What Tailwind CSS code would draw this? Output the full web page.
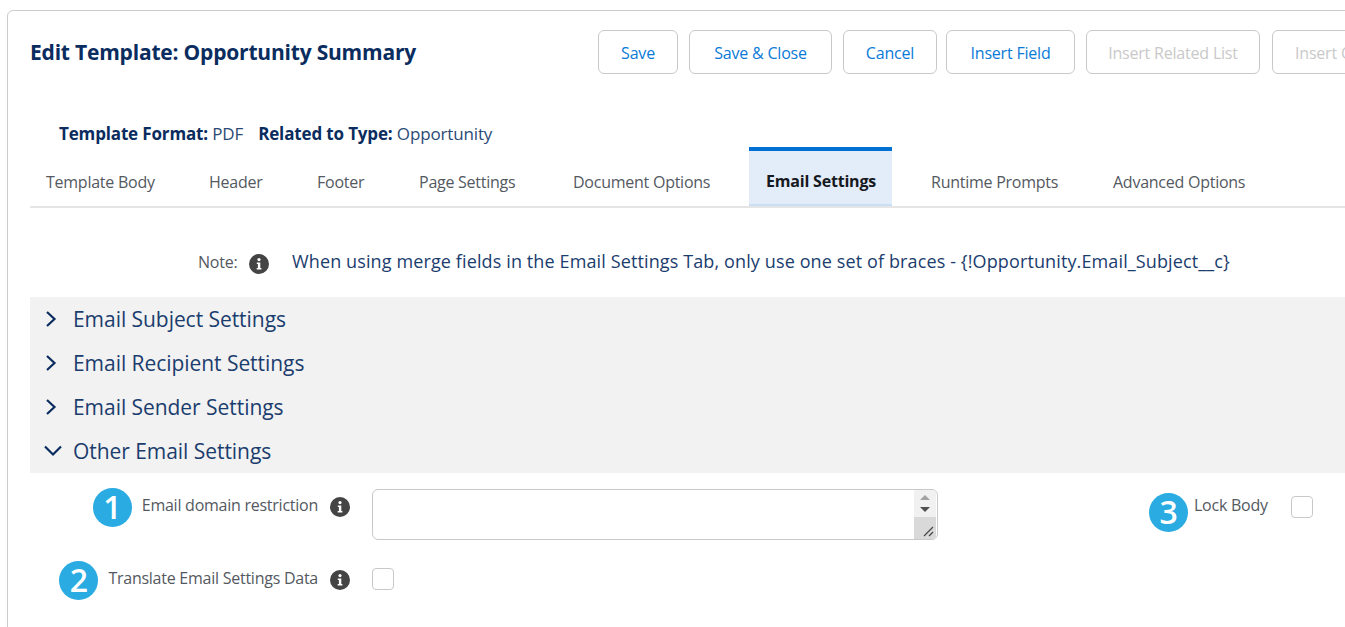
<!DOCTYPE html>
<html lang="en">
<head>
    <meta charset="UTF-8">
    <title>Edit Template</title>
    <script src="https://cdn.jsdelivr.net/npm/@tailwindcss/browser@4"></script>
</head>
<body class="bg-white h-[627px] overflow-hidden font-['Open_Sans',sans-serif]">
    <div class="ml-[7px] mt-[10px] w-[1500px] h-[700px] border border-[#cccccc] rounded-tl-md pl-[22px]">
        <!-- title + buttons -->
        <div class="flex items-start pt-[19px]">
            <h1 class="w-[568px] mt-[6px] -mb-[1px] text-[21px] leading-[32px] font-bold tracking-[-0.2px] text-[#0a2c5e]">Edit Template: Opportunity Summary</h1>
            <div class="flex gap-[11px] text-[16px] tracking-[-0.2px] text-[#0a7ad8]">
                <button class="w-[80px] h-[44px] pt-[2px] border border-[#c9c9c9] rounded-md">Save</button>
                <button class="w-[143px] h-[44px] pt-[2px] border border-[#c9c9c9] rounded-md">Save &amp; Close</button>
                <button class="w-[94px] h-[44px] pt-[2px] border border-[#c9c9c9] rounded-md -mr-[2px]">Cancel</button>
                <button class="w-[129px] h-[44px] pt-[2px] border border-[#c9c9c9] rounded-md">Insert Field</button>
                <button class="w-[174px] h-[44px] pt-[2px] border border-[#c9c9c9] rounded-md text-[#c9c9c9]">Insert Related List</button>
                <button class="ml-[1px] w-[140px] h-[44px] pt-[2px] border border-[#c9c9c9] rounded-md text-[#c9c9c9] text-left pl-[22px]">Insert Other</button>
            </div>
        </div>
        <!-- format line -->
        <div class="mt-[46px] ml-[29px] h-[28px] flex gap-[15px] text-[17px] leading-[28px] tracking-[-0.15px] text-[#2a4a75]">
            <span><b class="font-bold text-[#0a2c5e]">Template Format:</b> PDF</span>
            <span><b class="font-bold text-[#0a2c5e]">Related to Type:</b> Opportunity</span>
        </div>
        <!-- tabs -->
        <div class="mt-[-1px] w-[1500px] h-[61px] border-b-2 border-[#e5e5e5] flex items-stretch text-[16px] tracking-[-0.25px] text-[#54595f]">
            <div class="w-[179px] pl-[16px] pt-[23px]">Template Body</div>
            <div class="w-[108px] pt-[23px]">Header</div>
            <div class="w-[102px] pt-[23px]">Footer</div>
            <div class="w-[154px] pt-[23px]">Page Settings</div>
            <div class="w-[176px] pt-[23px]">Document Options</div>
            <div class="w-[143px] pl-[17px] pt-[18px] bg-[#e3edf9] border-t-[4px] border-b-[2px] border-t-[#0070d2] border-b-[#c9dff5] font-bold text-[#16191f] whitespace-nowrap tracking-[-0.2px]">Email Settings</div>
            <div class="w-[221px] pl-[39px] pt-[23px]">Runtime Prompts</div>
            <div class="pt-[23px]">Advanced Options</div>
        </div>
        <!-- note -->
        <div class="mt-[40px] ml-[168px] h-[28px] flex items-center text-[#1b3d6e] text-[18px] tracking-[0.12px]">
            <span class="text-[16px] tracking-[-0.2px] text-[#54595f] w-[41px]">Note:</span>
            <svg class="ml-[10px] w-[20px] h-[20px] mt-[3px]" viewBox="0 0 20 20"><circle cx="10" cy="10" r="10" fill="#444444"/><circle cx="10" cy="5.6" r="1.6" fill="#fff"/><path d="M7.8 8.4h3.5v5.6h1.1v1.5H7.7V14h1.2V9.900H7.8z" fill="#fff"/></svg>
            <span class="ml-[23px] -mt-[2px] whitespace-nowrap">When using merge fields in the Email Settings Tab, only use one set of braces - {!Opportunity.Email_Subject__c}</span>
        </div>
        <!-- accordion -->
        <div class="mt-[21px] bg-[#f2f2f2] text-[21px] tracking-[-0.05px] text-[#1b3d6e]">
            <div class="h-[44px] flex items-center pl-[14px]">
                <svg class="w-[14px] h-[16px] mr-[15px]" viewBox="0 0 14 16"><path d="M3 1L10.500 8 3 15" fill="none" stroke="#0a2c5e" stroke-width="2.200"/></svg>
                <span class="pt-[2px]">Email Subject Settings</span>
            </div>
            <div class="h-[44px] flex items-center pl-[14px]">
                <svg class="w-[14px] h-[16px] mr-[15px]" viewBox="0 0 14 16"><path d="M3 1L10.500 8 3 15" fill="none" stroke="#0a2c5e" stroke-width="2.200"/></svg>
                <span class="pt-[2px]">Email Recipient Settings</span>
            </div>
            <div class="h-[44px] flex items-center pl-[14px]">
                <svg class="w-[14px] h-[16px] mr-[15px]" viewBox="0 0 14 16"><path d="M3 1L10.500 8 3 15" fill="none" stroke="#0a2c5e" stroke-width="2.200"/></svg>
                <span class="pt-[2px]">Email Sender Settings</span>
            </div>
            <div class="h-[44px] flex items-center pl-[14px]">
                <svg class="w-[18px] h-[14px] mr-[11px]" viewBox="0 0 18 14"><path d="M1 2.500l8 8 8-8" fill="none" stroke="#0a2c5e" stroke-width="2.200"/></svg>
                <span class="pt-[2px]">Other Email Settings</span>
            </div>
        </div>
        <!-- fields -->
        <div class="flex items-start mt-[16px] text-[16px] tracking-[-0.25px] text-[#54595f]">
            <div class="w-[288px] flex justify-end gap-[10px] pt-[1px] -mt-[2px]">
                <span class="w-[39px] h-[39px] rounded-full bg-[#2aace3] text-white font-semibold text-[32px] leading-[38px] text-center shrink-0">1</span>
                <span class="mt-[5px] whitespace-nowrap">Email domain restriction</span>
            </div>
            <svg class="ml-[12px] mt-[8px] w-[20px] h-[20px]" viewBox="0 0 20 20"><circle cx="10" cy="10" r="10" fill="#444444"/><circle cx="10" cy="5.6" r="1.6" fill="#fff"/><path d="M7.8 8.4h3.5v5.6h1.1v1.5H7.7V14h1.2V9.900H7.8z" fill="#fff"/></svg>
            <div class="relative ml-[22px] w-[566px] h-[51px] border border-[#c9c9c9] rounded-md overflow-hidden">
                <div class="absolute right-[1px] top-0 bottom-0 w-[22px] bg-[#f1f1f1]">
                    <svg class="w-[22px] h-[28px]" viewBox="0 0 22 28"><path d="M6 10l5-5 5 5z" fill="#a3a3a3"/><path d="M6 17h10l-5 5z" fill="#505050"/></svg>
                    <div class="absolute left-0 right-0 bottom-0 h-[22px] bg-[#d9d9d9]">
                        <svg class="w-[22px] h-[22px]" viewBox="0 0 22 22"><path d="M10 19l9-9M15 19l4-4" stroke="#444444" stroke-width="1.200"/></svg>
                    </div>
                </div>
            </div>
            <div class="ml-[211px] flex items-start gap-[6px]">
                <span class="w-[39px] h-[39px] mt-[4px] rounded-full bg-[#2aace3] text-white font-semibold text-[32px] leading-[38px] text-center shrink-0">3</span>
                <span class="whitespace-nowrap mt-[4px]">Lock Body</span>
            </div>
            <div class="ml-[23px] mt-[7px] w-[22px] h-[22px] border border-[#c9c9c9] rounded-[4px]"></div>
        </div>
        <div class="flex items-start mt-[21px] text-[16px] tracking-[-0.25px] text-[#54595f]">
            <div class="w-[288px] flex justify-end gap-[10px]">
                <span class="w-[39px] h-[39px] rounded-full bg-[#2aace3] text-white font-semibold text-[32px] leading-[38px] text-center shrink-0">2</span>
                <span class="mt-[5px] whitespace-nowrap">Translate Email Settings Data</span>
            </div>
            <svg class="ml-[12px] mt-[9px] w-[20px] h-[20px]" viewBox="0 0 20 20"><circle cx="10" cy="10" r="10" fill="#444444"/><circle cx="10" cy="5.6" r="1.6" fill="#fff"/><path d="M7.8 8.4h3.5v5.6h1.1v1.5H7.7V14h1.2V9.900H7.8z" fill="#fff"/></svg>
            <div class="ml-[22px] mt-[7px] w-[22px] h-[22px] border border-[#c9c9c9] rounded-[4px]"></div>
        </div>
    </div>
</body>
</html>
